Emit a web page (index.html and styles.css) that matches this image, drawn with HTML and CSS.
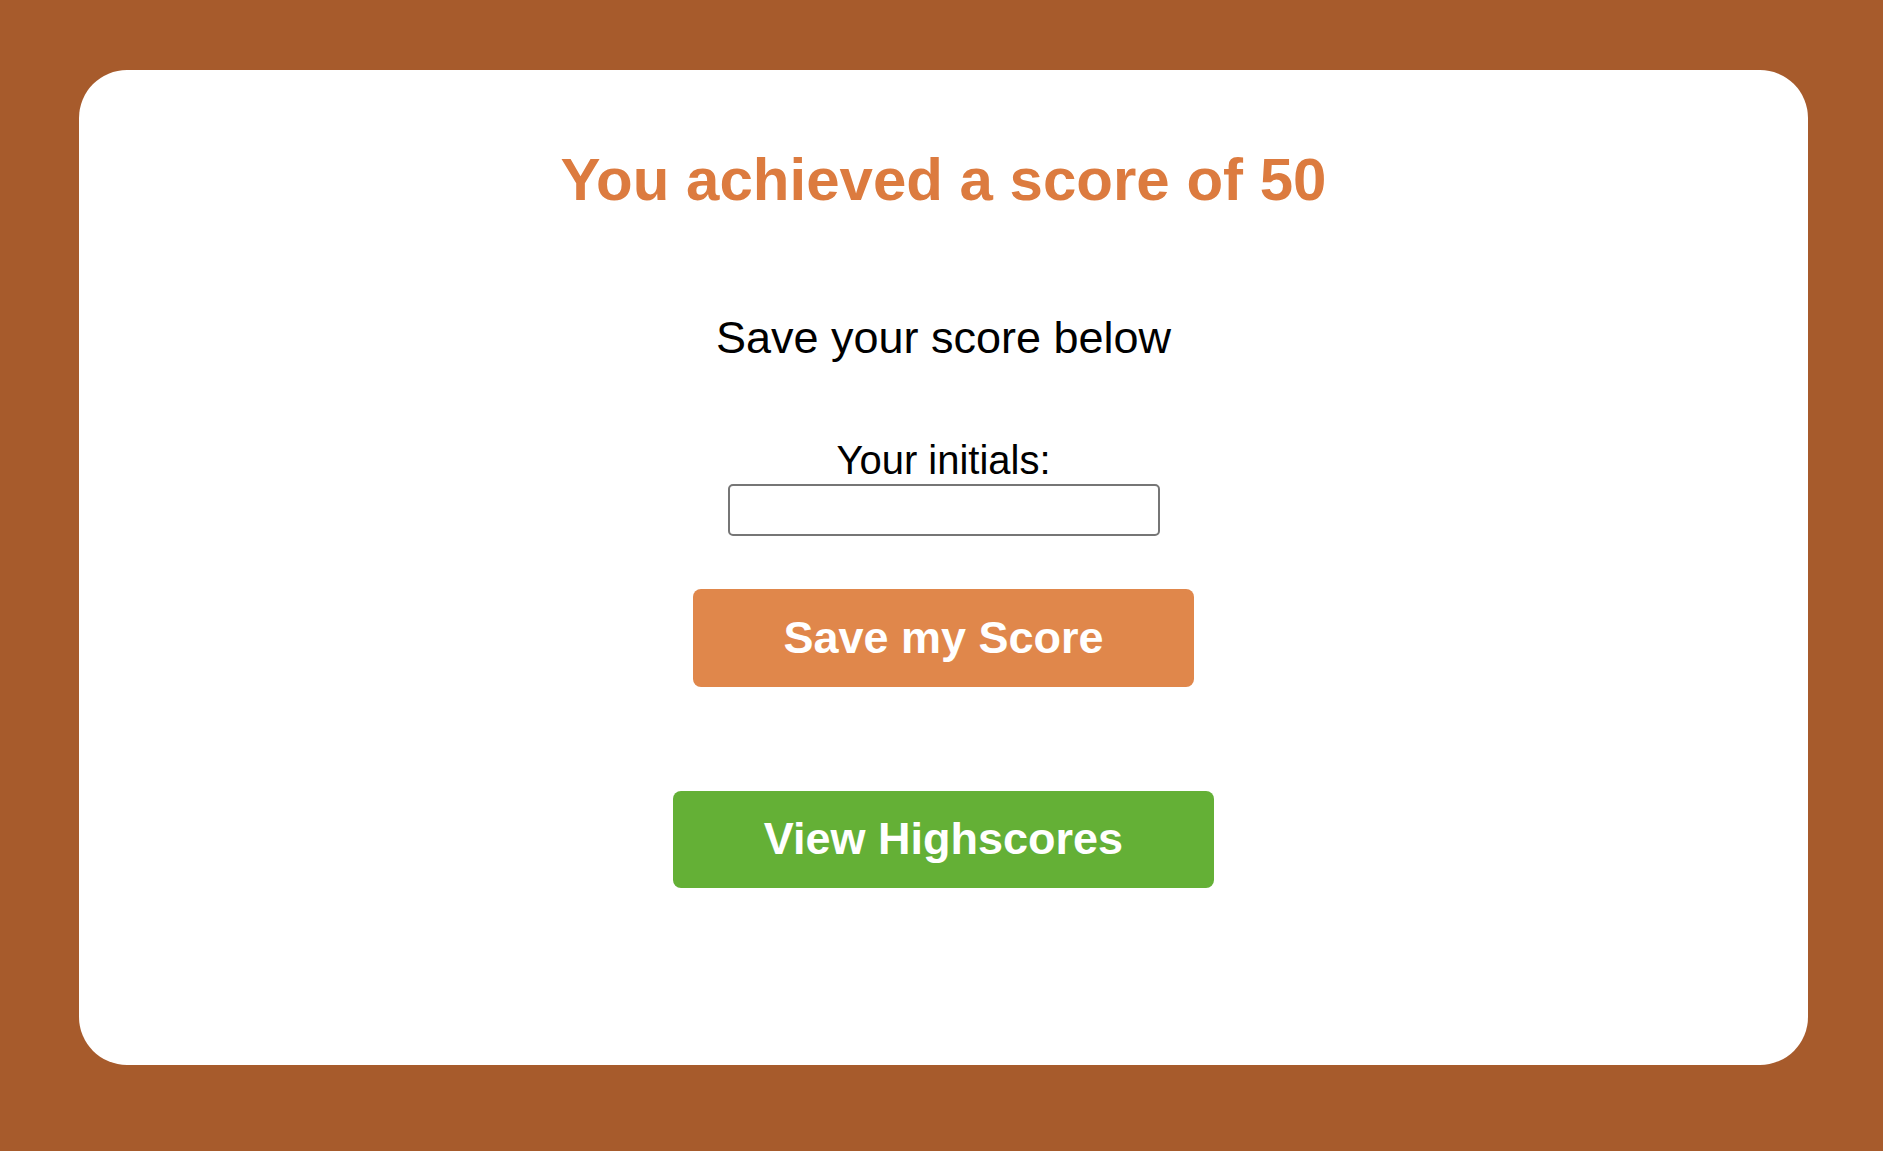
FILE: index.html
```html
<!DOCTYPE html>
<html lang="en">
<head>
<meta charset="utf-8">
<title>Score</title>
<link rel="stylesheet" href="styles.css">
</head>
<body>
<main class="card">
  <h1 class="title">You achieved a score of 50</h1>
  <p class="subtitle">Save your score below</p>
  <form class="save-form">
    <label class="label" for="initials">Your initials:</label>
    <input class="input" id="initials" type="text">
    <button class="btn btn-save" type="button">Save my Score</button>
  </form>
  <button class="btn btn-view" type="button">View Highscores</button>
</main>
</body>
</html>
```
FILE: styles.css
```css
html, body {
  margin: 0;
  padding: 0;
}
body {
  background: #a75b2c;
  font-family: "Liberation Sans", Arial, sans-serif;
  padding: 70px 75px 85px 79px;
}
.card {
  background: #ffffff;
  border-radius: 48px;
  display: flex;
  flex-direction: column;
  align-items: center;
  padding: 75px 0 177px;
}
.title {
  margin: 0;
  font-size: 60px;
  line-height: 69px;
  font-weight: 700;
  color: #dc7b3f;
}
.subtitle {
  margin: 98px 0 0;
  font-size: 45px;
  line-height: 52px;
  color: #000;
}
.save-form {
  display: flex;
  flex-direction: column;
  align-items: center;
  margin: 73px 0 0;
}
.label {
  font-size: 40px;
  line-height: 47px;
  color: #000;
}
.input {
  box-sizing: border-box;
  width: 432px;
  height: 52px;
  margin: 0;
  border: 2px solid #767676;
  border-radius: 5px;
  background: #fff;
  font-size: 30px;
  font-family: inherit;
  padding: 0 8px;
}
.btn {
  box-sizing: border-box;
  border: none;
  border-radius: 8px;
  color: #ffffff;
  font-family: "Liberation Sans", Arial, sans-serif;
  font-weight: 700;
  font-size: 45px;
  line-height: 52px;
  padding: 23px 90px;
  cursor: pointer;
}
.btn-save {
  background: #e0874b;
  margin-top: 53px;
}
.btn-view {
  background: #64b036;
  margin-top: 104px;
  padding: 22px 90px 23px;
  min-width: 541px;
}
```
